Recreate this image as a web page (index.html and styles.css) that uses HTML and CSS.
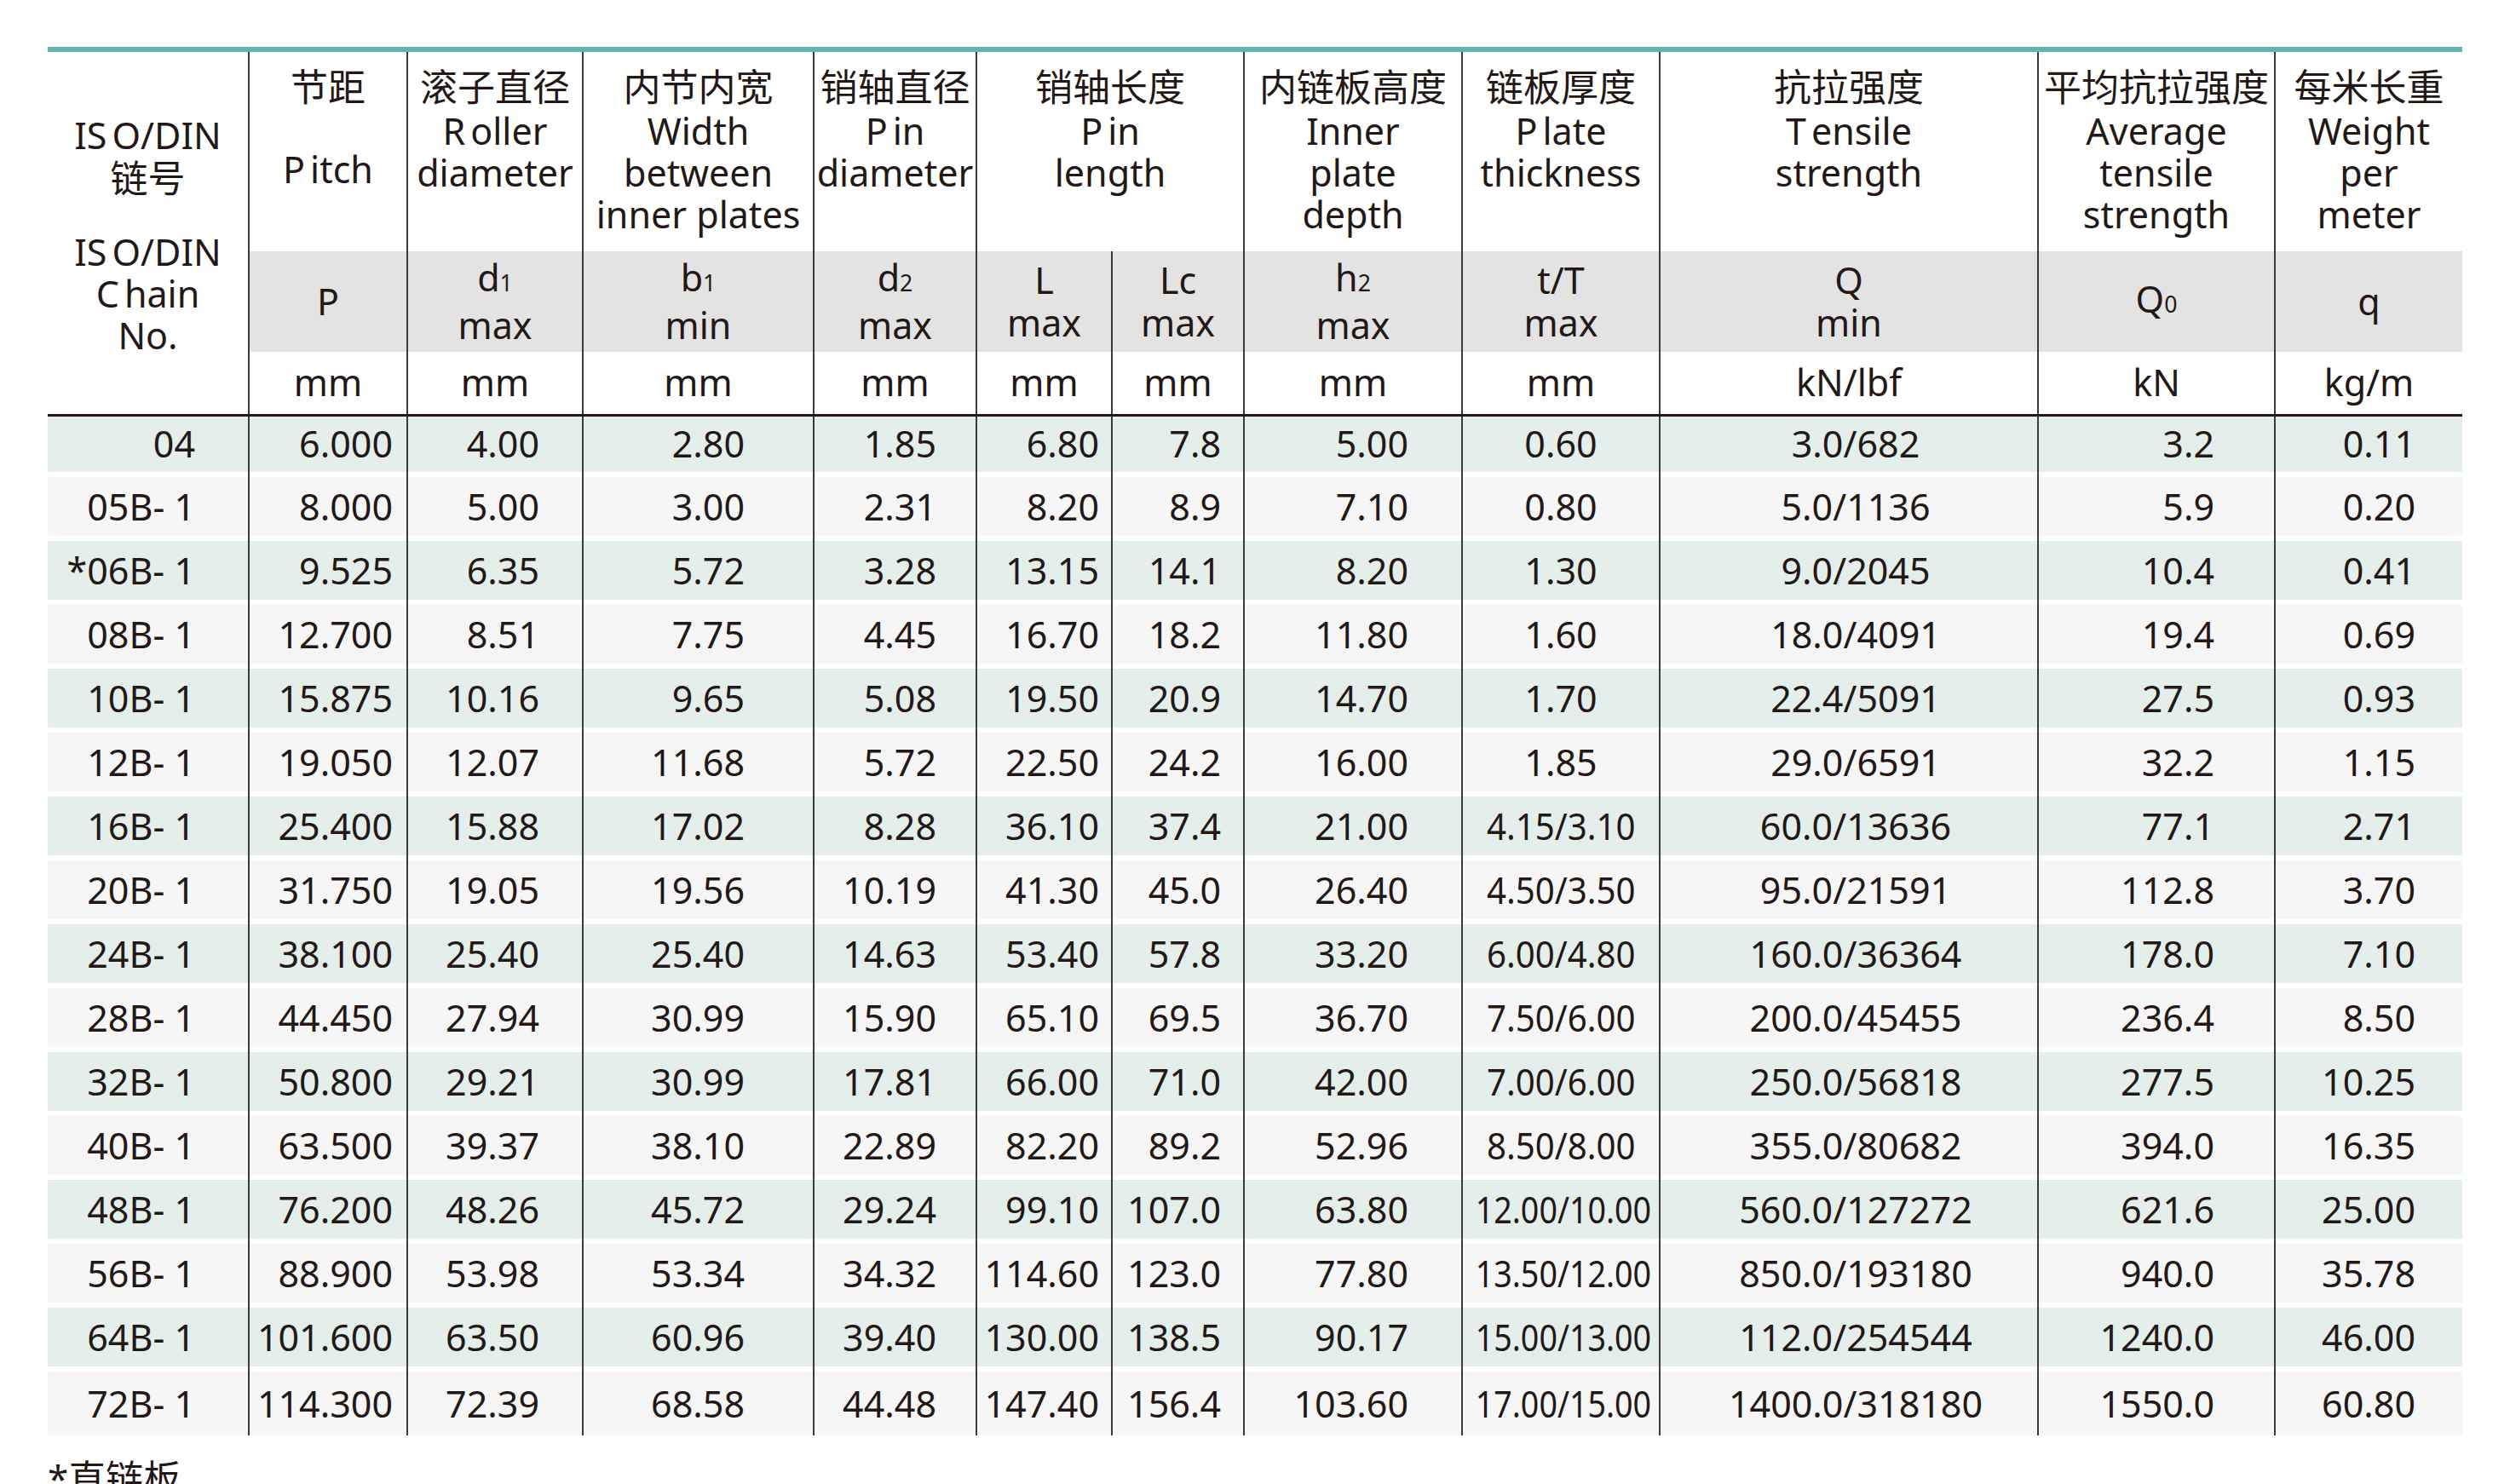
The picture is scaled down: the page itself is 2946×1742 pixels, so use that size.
FILE: index.html
```html
<!DOCTYPE html>
<html lang="zh-CN">
<head>
<meta charset="utf-8">
<title>ISO/DIN Chain Specifications</title>
<link rel="stylesheet" href="styles.css">
</head>
<body>
<div class="page">
  <div class="sheet">
    <table class="spec">
      <colgroup>
        <col class="w1"><col class="w2"><col class="w3"><col class="w4"><col class="w5"><col class="w6">
        <col class="w7"><col class="w8"><col class="w9"><col class="w10"><col class="w11"><col class="w12">
      </colgroup>
      <thead>
        <tr class="r1">
          <th class="chain" rowspan="3">
            <div class="ln">I<span class="k">S</span>O/DIN</div>
            <div class="ln cn">链号</div>
            <div class="ln gap">I<span class="k">S</span>O/DIN</div>
            <div class="ln"><span class="k">C</span>hain</div>
            <div class="ln">No.</div>
          </th>
          <th><div class="cn">节距</div><div class="ln pitch"><span class="k">P</span>itch</div></th>
          <th><div class="cn">滚子直径</div><div class="ln"><span class="k">R</span>oller</div><div class="ln">diameter</div></th>
          <th><div class="cn">内节内宽</div><div class="ln">Width</div><div class="ln">between</div><div class="ln">inner plates</div></th>
          <th><div class="cn">销轴直径</div><div class="ln"><span class="k">P</span>in</div><div class="ln">diameter</div></th>
          <th colspan="2"><div class="cn">销轴长度</div><div class="ln"><span class="k">P</span>in</div><div class="ln">length</div></th>
          <th><div class="cn">内链板高度</div><div class="ln">Inner</div><div class="ln">plate</div><div class="ln">depth</div></th>
          <th><div class="cn">链板厚度</div><div class="ln"><span class="k">P</span>late</div><div class="ln">thickness</div></th>
          <th><div class="cn">抗拉强度</div><div class="ln"><span class="k">T</span>ensile</div><div class="ln">strength</div></th>
          <th><div class="cn">平均抗拉强度</div><div class="ln">Average</div><div class="ln">tensile</div><div class="ln">strength</div></th>
          <th><div class="cn">每米长重</div><div class="ln">Weight</div><div class="ln">per</div><div class="ln">meter</div></th>
        </tr>
        <tr class="r2">
          <th>P</th>
          <th>d<span class="sub">1</span><br>max</th>
          <th>b<span class="sub">1</span><br>min</th>
          <th>d<span class="sub">2</span><br>max</th>
          <th>L<br>max</th>
          <th>Lc<br>max</th>
          <th>h<span class="sub">2</span><br>max</th>
          <th>t/T<br>max</th>
          <th>Q<br>min</th>
          <th>Q<span class="sub">0</span></th>
          <th>q</th>
        </tr>
        <tr class="r3">
          <th>mm</th><th>mm</th><th>mm</th><th>mm</th><th>mm</th><th>mm</th><th>mm</th><th>mm</th>
          <th>kN/lbf</th><th>kN</th><th>kg/m</th>
        </tr>
      </thead>
      <tbody>
        <tr><td>04</td><td>6.000</td><td>4.00</td><td>2.80</td><td>1.85</td><td>6.80</td><td>7.8</td><td>5.00</td><td>0.60</td><td>3.0/682</td><td>3.2</td><td>0.11</td></tr>
        <tr><td>05B- 1</td><td>8.000</td><td>5.00</td><td>3.00</td><td>2.31</td><td>8.20</td><td>8.9</td><td>7.10</td><td>0.80</td><td>5.0/1136</td><td>5.9</td><td>0.20</td></tr>
        <tr><td>*06B- 1</td><td>9.525</td><td>6.35</td><td>5.72</td><td>3.28</td><td>13.15</td><td>14.1</td><td>8.20</td><td>1.30</td><td>9.0/2045</td><td>10.4</td><td>0.41</td></tr>
        <tr><td>08B- 1</td><td>12.700</td><td>8.51</td><td>7.75</td><td>4.45</td><td>16.70</td><td>18.2</td><td>11.80</td><td>1.60</td><td>18.0/4091</td><td>19.4</td><td>0.69</td></tr>
        <tr><td>10B- 1</td><td>15.875</td><td>10.16</td><td>9.65</td><td>5.08</td><td>19.50</td><td>20.9</td><td>14.70</td><td>1.70</td><td>22.4/5091</td><td>27.5</td><td>0.93</td></tr>
        <tr><td>12B- 1</td><td>19.050</td><td>12.07</td><td>11.68</td><td>5.72</td><td>22.50</td><td>24.2</td><td>16.00</td><td>1.85</td><td>29.0/6591</td><td>32.2</td><td>1.15</td></tr>
        <tr><td>16B- 1</td><td>25.400</td><td>15.88</td><td>17.02</td><td>8.28</td><td>36.10</td><td>37.4</td><td>21.00</td><td><span class="cond">4.15/3.10</span></td><td>60.0/13636</td><td>77.1</td><td>2.71</td></tr>
        <tr><td>20B- 1</td><td>31.750</td><td>19.05</td><td>19.56</td><td>10.19</td><td>41.30</td><td>45.0</td><td>26.40</td><td><span class="cond">4.50/3.50</span></td><td>95.0/21591</td><td>112.8</td><td>3.70</td></tr>
        <tr><td>24B- 1</td><td>38.100</td><td>25.40</td><td>25.40</td><td>14.63</td><td>53.40</td><td>57.8</td><td>33.20</td><td><span class="cond">6.00/4.80</span></td><td>160.0/36364</td><td>178.0</td><td>7.10</td></tr>
        <tr><td>28B- 1</td><td>44.450</td><td>27.94</td><td>30.99</td><td>15.90</td><td>65.10</td><td>69.5</td><td>36.70</td><td><span class="cond">7.50/6.00</span></td><td>200.0/45455</td><td>236.4</td><td>8.50</td></tr>
        <tr><td>32B- 1</td><td>50.800</td><td>29.21</td><td>30.99</td><td>17.81</td><td>66.00</td><td>71.0</td><td>42.00</td><td><span class="cond">7.00/6.00</span></td><td>250.0/56818</td><td>277.5</td><td>10.25</td></tr>
        <tr><td>40B- 1</td><td>63.500</td><td>39.37</td><td>38.10</td><td>22.89</td><td>82.20</td><td>89.2</td><td>52.96</td><td><span class="cond">8.50/8.00</span></td><td>355.0/80682</td><td>394.0</td><td>16.35</td></tr>
        <tr><td>48B- 1</td><td>76.200</td><td>48.26</td><td>45.72</td><td>29.24</td><td>99.10</td><td>107.0</td><td>63.80</td><td><span class="cond2">12.00/10.00</span></td><td>560.0/127272</td><td>621.6</td><td>25.00</td></tr>
        <tr><td>56B- 1</td><td>88.900</td><td>53.98</td><td>53.34</td><td>34.32</td><td>114.60</td><td>123.0</td><td>77.80</td><td><span class="cond2">13.50/12.00</span></td><td>850.0/193180</td><td>940.0</td><td>35.78</td></tr>
        <tr><td>64B- 1</td><td>101.600</td><td>63.50</td><td>60.96</td><td>39.40</td><td>130.00</td><td>138.5</td><td>90.17</td><td><span class="cond2">15.00/13.00</span></td><td>112.0/254544</td><td>1240.0</td><td>46.00</td></tr>
        <tr><td>72B- 1</td><td>114.300</td><td>72.39</td><td>68.58</td><td>44.48</td><td>147.40</td><td>156.4</td><td>103.60</td><td><span class="cond2">17.00/15.00</span></td><td>1400.0/318180</td><td>1550.0</td><td>60.80</td></tr>
      </tbody>
    </table>
  </div>
  <p class="note">*直链板</p>
</div>
</body>
</html>
```

FILE: styles.css
```css
html, body {
  margin: 0;
  padding: 0;
  background: #ffffff;
}

body {
  font-family: "Noto Sans", "Noto Sans CJK SC", sans-serif;
  color: #231815;
  font-size: 43px;
}

.page {
  padding: 55px 0 0 56px;
  width: 2834px;
}

.sheet {
  width: 2834px;
  border-top: 6px solid #62b4ae;
}

.spec {
  width: 2834px;
  border-collapse: collapse;
  table-layout: fixed;
}

.w1 { width: 236px; }
.w2 { width: 186px; }
.w3 { width: 206px; }
.w4 { width: 271px; }
.w5 { width: 191px; }
.w6 { width: 159px; }
.w7 { width: 155px; }
.w8 { width: 256px; }
.w9 { width: 232px; }
.w10 { width: 444px; }
.w11 { width: 278px; }
.w12 { width: 220px; }

.spec th,
.spec td {
  padding: 0;
  border-left: 2px solid #3b3b3b;
  font-weight: normal;
  white-space: nowrap;
}

/* header */
.spec thead th {
  text-align: center;
}

.r1 { height: 234px; }
.r2 { height: 118px; }
.r3 { height: 74px; }

.r1 th {
  vertical-align: top;
  padding-top: 10px;
}

.spec .chain {
  border-left: none;
  padding-top: 73px;
  border-bottom: 3px solid #231815;
}

.cn {
  font-family: "Noto Sans CJK SC", sans-serif;
  font-size: 44px;
  line-height: 58px;
}

.ln {
  line-height: 49px;
}

.chain .cn {
  line-height: 49px;
}

.ln.gap {
  margin-top: 39px;
}

.ln.pitch {
  margin-top: 45px;
}

.k {
  margin-right: 0.14em;
}

.r2 th {
  background: #e3e3e3;
  vertical-align: middle;
  line-height: 50px;
}

.r3 th {
  vertical-align: middle;
  line-height: 50px;
  border-bottom: 3px solid #231815;
}

.sub {
  font-size: 0.62em;
}

/* body */
.spec tbody tr { height: 75px; }
.spec tbody tr:first-child { height: 67px; }
.spec tbody tr:last-child { height: 81px; }

.spec tbody td {
  text-align: right;
  vertical-align: middle;
  line-height: 50px;
  padding-top: 6px;
  background: linear-gradient(#ffffff 0 6px, var(--row) 6px);
}

.spec tbody tr:first-child td {
  padding-top: 0;
  background: var(--row);
}

.spec tbody tr:nth-child(odd) { --row: #e4efec; }
.spec tbody tr:nth-child(even) { --row: #f6f6f6; }

.spec tbody td:nth-child(1) { border-left: none; padding-right: 62px; }
.spec tbody td:nth-child(2) { padding-right: 16px; }
.spec tbody td:nth-child(3) { padding-right: 50px; }
.spec tbody td:nth-child(4) { padding-right: 80px; }
.spec tbody td:nth-child(5) { padding-right: 46px; }
.spec tbody td:nth-child(6) { padding-right: 14px; }
.spec tbody td:nth-child(7) { padding-right: 26px; }
.spec tbody td:nth-child(8) { padding-right: 62px; }
.spec tbody td:nth-child(9) { text-align: center; }
.spec tbody td:nth-child(10) { text-align: center; padding-left: 16px; }
.spec tbody td:nth-child(11) { padding-right: 70px; }
.spec tbody td:nth-child(12) { padding-right: 55px; }

.cond,
.cond2 {
  display: inline-block;
  transform-origin: center;
}

.cond { transform: scaleX(0.935); }
.cond2 { transform: scaleX(0.875); }

.note {
  margin: 25px 0 0 0;
  font-size: 44px;
  line-height: 50px;
}
```
